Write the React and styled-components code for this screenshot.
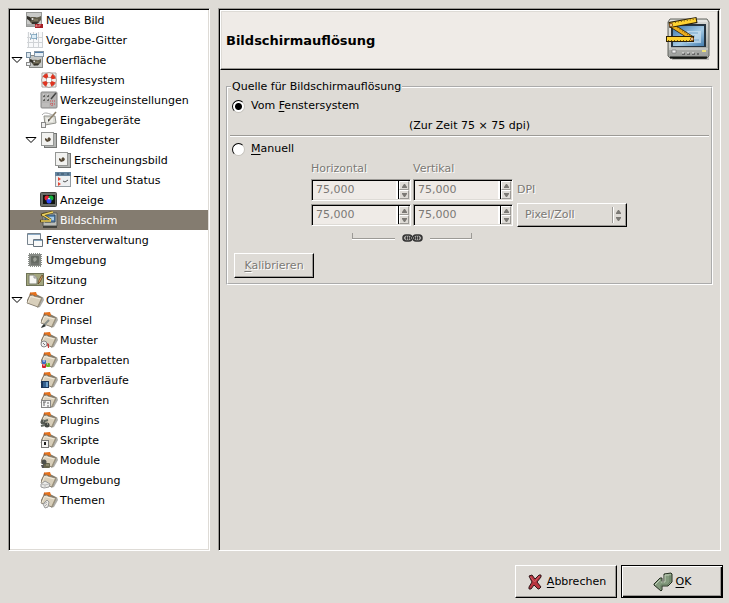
import React, { useState } from "react";
import styled, { createGlobalStyle, css } from "styled-components";

const c = {
  bg: "#dedbd6",
  pale: "#efebe7",
  shade: "#9c9a96",
  off: "#7b7975",
  selected: "#847c70",
};

const GlobalStyle = createGlobalStyle`
  * { box-sizing: border-box; }
  body { margin: 0; background: ${c.bg}; }
  body, button, input, select {
    font-family: "DejaVu Sans", sans-serif;
    font-size: 11px;
    line-height: 14px;
    color: #000;
  }
  u { text-underline-offset: 2px; text-decoration-thickness: 1px; }
`;

const sunken = css`
  border: 1px solid;
  border-color: ${c.shade} #fff #fff ${c.shade};
  box-shadow: inset 1px 1px 0 #000, inset -1px -1px 0 ${c.bg};
`;

const raised = css`
  border: 1px solid;
  border-color: #fff #000 #000 #fff;
  box-shadow: inset -1px -1px 0 ${c.shade};
`;

const etched = css`
  color: ${c.off};
  text-shadow: 1px 1px 0 #fff;
`;

const Dialog = styled.div`
  min-height: 100vh;
  display: flex;
  flex-direction: column;
`;

const Main = styled.main`
  flex: 1;
  display: flex;
  gap: 8px;
  padding: 8px 8px 0;
`;

const TreePanel = styled.nav`
  ${sunken}
  flex: 0 0 202px;
  padding: 1px;
  background: #fff;
`;

const TreeList = styled.ul`
  list-style: none;
  margin: 0;
  padding: 0;
`;

const TreeRow = styled.li`
  display: flex;
  align-items: center;
  height: 20px;
  padding-left: ${(p) => p.$depth * 14}px;
  background: ${(p) => (p.$selected ? c.selected : "transparent")};
`;

const Toggle = styled.button`
  width: 16px;
  height: 20px;
  padding: 0 0 0 1px;
  border: 0;
  background: none;
  display: flex;
  align-items: center;
`;

const ToggleSpace = styled.span`
  width: 16px;
`;

const TreeItem = styled.button`
  flex: 1;
  display: flex;
  align-items: center;
  gap: 2px;
  padding: 0;
  border: 0;
  background: none;
  text-align: left;
  color: ${(p) => (p.$selected ? "#fff" : "#000")};
  white-space: nowrap;
  &:focus { outline: none; }
`;

const TreeLabel = styled.span`
  padding-top: 2px;
`;

const Panel = styled.section`
  ${sunken}
  flex: 1;
  min-width: 0;
  padding: 1px;
`;

const PanelHeader = styled.header`
  border: 1px solid;
  border-color: #fff #000 #000 #fff;
  box-shadow: inset -1px -1px 0 ${c.shade}, inset 1px 1px 0 ${c.bg};
  height: 60px;
  padding: 0 5px;
  background: ${c.pale};
  display: flex;
  align-items: center;
  justify-content: space-between;
`;

const Title = styled.h1`
  margin: 0;
  padding-top: 2px;
  font-size: 13px;
  line-height: 18px;
`;

const Group = styled.fieldset`
  margin: 10px 6px 0;
  padding: 4px 2px 5px;
  border: 2px groove #fff;
  min-width: 0;
`;

const Legend = styled.legend`
  margin-left: 1px;
  padding: 0 1px;
`;

const Choice = styled.label`
  display: flex;
  align-items: center;
  gap: 6px;
  height: 16px;
  padding-left: 2px;
`;

const Radio = styled.input`
  appearance: none;
  width: 13px;
  height: 13px;
  margin: 0;
  border-radius: 50%;
  border: 1px solid;
  border-color: #000 #c6c3bd #c6c3bd #000;
  background: #fff;
  &:checked { background: radial-gradient(circle, #000 0 3px, #fff 4px); }
`;

const Current = styled.p`
  margin: 5px 0 2px;
  text-align: center;
`;

const Rule = styled.hr`
  margin: 0 0 4px;
  border: 0;
  border-top: 1px solid ${c.shade};
  border-bottom: 1px solid #fff;
`;

const Manual = styled.div`
  display: grid;
  grid-template-columns: 100px 100px 112px;
  grid-template-rows: 18px 24px 26px 20px;
  column-gap: 2px;
  align-items: center;
  margin: 3px 0 0 81px;
`;

const FieldLabel = styled.label`
  ${etched}
`;

const Unit = styled.span`
  ${etched}
  padding-left: 2px;
`;

const Spin = styled.div`
  ${sunken}
  display: flex;
  height: 22px;
  padding: 1px;
  background: ${c.pale};
`;

const SpinInput = styled.input`
  ${etched}
  text-shadow: none;
  flex: 1;
  min-width: 0;
  padding: 0 3px;
  border: 0;
  border-right: 2px solid #fff;
  background: transparent;
`;

const Steps = styled.div`
  width: 11px;
  display: flex;
  flex-direction: column;
  border-left: 1px solid #000;
`;

const Step = styled.button`
  flex: 1;
  display: flex;
  align-items: center;
  justify-content: center;
  padding: 0;
  border: 1px solid;
  border-color: #fff ${c.shade} ${c.shade} #fff;
  background: ${c.bg};
`;

const SelectBox = styled.div`
  ${raised}
  display: grid;
  grid-template-columns: 1fr 14px;
  align-items: center;
  height: 24px;
  margin-left: 2px;
`;

const Select = styled.select`
  ${etched}
  appearance: none;
  grid-area: 1 / 1 / 2 / 3;
  height: 22px;
  padding: 0 7px;
  border: 0;
  background: transparent;
  opacity: 1;
`;

const SelectArrows = styled.svg`
  grid-area: 1 / 2;
  pointer-events: none;
`;

const ChainRow = styled.div`
  grid-column: 1 / 3;
  display: flex;
  align-items: center;
  justify-content: center;
  gap: 7px;
  height: 16px;
  padding: 0 41px;
`;

const Arm = styled.span`
  flex: 1;
  height: 6px;
  margin-bottom: 5px;
  border-bottom: 1px solid ${c.shade};
  box-shadow: 0 1px 0 #fff;
  border-left: ${(p) => (p.$left ? `1px solid ${c.shade}` : "0")};
  border-right: ${(p) => (p.$left ? "0" : `1px solid ${c.shade}`)};
`;

const ChainButton = styled.button`
  display: flex;
  padding: 0;
  border: 0;
  background: none;
`;

const Calibrate = styled.button`
  ${raised}
  ${etched}
  width: 80px;
  height: 25px;
  margin: 5px 0 0 4px;
  padding: 0;
  background: ${c.bg};
`;

const Footer = styled.footer`
  display: flex;
  justify-content: flex-end;
  gap: 4px;
  padding: 14px 6px 5px;
`;

const Action = styled.button`
  ${raised}
  display: flex;
  align-items: center;
  justify-content: center;
  gap: 3px;
  width: 102px;
  height: 33px;
  padding: 0;
  background: ${c.bg};
  ${(p) =>
    p.$primary &&
    css`
      border-color: #000;
      box-shadow: inset 1px 1px 0 #fff, inset -1px -1px 0 #000, inset -2px -2px 0 ${c.shade};
    `}
`;

const ActionIcon = styled.svg`
  flex: none;
`;

/* Emblems drawn over the lower left corner of a folder */
const emblems = {
  brush: (
    <>
      <path d="M9 9 4 14" stroke="#8b918c" strokeWidth="2" />
      <path d="M1 17l1-2 2-2 2 2-2 1z" fill="#303634" />
    </>
  ),
  pattern: (
    <>
      <circle cx="4" cy="13" r="3" fill="#eee" stroke="#888" />
      <path d="M7 12l2 1v4H8z" fill="#c93a3a" />
      <path d="M3 12l2 2" stroke="#777" />
    </>
  ),
  palette: (
    <>
      <rect x="2" y="9" width="4" height="4" rx="1" fill="#3d6cc0" />
      <rect x="2" y="13" width="4" height="4" rx="1" fill="#d2222c" />
      <rect x="6" y="12" width="4" height="4" rx="1" fill="#6cb52b" />
      <path d="M3 10h2M3 14h2M7 13h1" stroke="#eef" />
    </>
  ),
  gradient: (
    <>
      <rect x="1" y="10" width="8" height="7" fill="#1d3657" />
      <rect x="3" y="11" width="3" height="5" fill="#36618f" />
      <rect x="6" y="11" width="2" height="5" fill="#6fa1cb" />
    </>
  ),
  font: (
    <>
      <rect x="1.5" y="9.500" width="9" height="7" fill="#f6f6f6" stroke="#858585" />
      <path d="M3 11h3M4 11v4M8 11v2M8 14v2" stroke="#666" />
    </>
  ),
  plug: (
    <>
      <circle cx="3" cy="11" r="2.5" fill="#555953" />
      <circle cx="7" cy="14" r="2.5" fill="#444843" />
      <path d="M1 15l4-1M5 10l3-1" stroke="#5f665e" strokeWidth="2" />
      <path d="M3 10h1M7 13h1" stroke="#c3c6bf" />
    </>
  ),
  script: (
    <>
      <rect x="1.5" y="9.500" width="7" height="7" fill="#f4f4f4" stroke="#777" />
      <path d="M4 11h2v3H4z" fill="#222" />
    </>
  ),
  module: (
    <>
      <rect x="3" y="12" width="7" height="5" rx="1" fill="#68664e" />
      <circle cx="4" cy="11" r="2.5" fill="#4d504c" />
      <path d="M1 14h3v3H2z" fill="#555" />
      <path d="M6 14h3" stroke="#aaa68b" />
    </>
  ),
  cube: (
    <>
      <path d="M1 13l4-3 5 3-1 3-5 1-3-1z" fill="#e9e9e6" stroke="#999" />
      <path d="M1 13l4 1 4-1M5 14v3" stroke="#bbb" fill="none" />
    </>
  ),
  theme: (
    <>
      <path d="M3 13l4-4 2 2-1 5-3 1z" fill="#eceae5" stroke="#999" />
      <path d="M4 13l3-2M5 15l2-2" stroke="#aaa" />
    </>
  ),
};

function Folder({ emblem }) {
  return (
    <>
      <path d="M15 6h2l1 3-4 7-3 1z" fill="#6a675f" opacity=".55" />
      <path d="M1 9 4 3h6l6 3-1 2-3 8L1 12z" fill="#857c6b" />
      <path d="M4.500 1.500 10 1l1 3-1 1-6-2z" fill="#e5711b" />
      <path d="M4.500 1.500 4 4l5 1" stroke="#ac470c" strokeWidth=".7" />
      <path d="M1 12 4 4.500l3-.5 1 1 8 2-4 9z" fill="#d8cfbb" stroke="#82796a" strokeWidth=".8" />
      <path d="M2 11.500 4.500 5.500l10 2.500" stroke="#f3ecdc" />
      <path d="M12 15l3.500-7.500" stroke="#a1977f" />
      {emblem && emblems[emblem]}
    </>
  );
}

const Wilber = () => (
  <>
    <path d="M4 11c-1-3 0-5 2-5h3c2 1 4 0 6-1v4l-3 3-6 1z" fill="#605c4b" />
    <path d="M1 5l3 1 2 3-2 1-3-2z" fill="#302e28" />
    <path d="M6 11h7l-2 2H6z" fill="#37332b" />
    <circle cx="6.5" cy="8" r="1" fill="#eee" />
    <path d="M8 9h4" stroke="#9c927a" />
  </>
);

const ImageStack = () => (
  <>
    <rect x="4.5" y="2.500" width="12" height="14" fill="#b4b6b4" stroke="#747674" />
    <rect x="1.5" y="1.500" width="12" height="13" fill="#f2f2f0" stroke="#949694" />
    <path d="M5 7l2 1 2-2 2 2-1 2-3 1-2-2z" fill="#554937" />
    <path d="M7 8h1" stroke="#d9cdb8" />
  </>
);

const icons = {
  newImage: () => (
    <>
      <rect x=".5" y="1.500" width="15" height="14" fill="#c9cac8" stroke="#969896" />
      <Wilber />
      <path d="M1 14h8" stroke="#888" />
      <rect x="9" y="13" width="8" height="4" fill="#a51d25" />
      <path d="M10 16v-2h1v2M13 16v-2h2" stroke="#f5aaa7" fill="none" strokeWidth=".7" />
    </>
  ),
  grid: () => (
    <>
      <rect x="1" y="1" width="16" height="16" fill="#f8f9fa" />
      <path d="M1 6.500h16M1 11.500h16M1 16.500h16M2.500 1v16M7.500 1v16M12.500 1v16M16.500 1v16" stroke="#d0d3d6" />
      <path d="M5.500 3.500h5v4h-5z" fill="#dcecf5" stroke="#8eb0c6" />
      <path d="M4 3h1M10 3h1M4 8h1M10 8h1" stroke="#416d8c" />
    </>
  ),
  interface: () => (
    <>
      <rect x="3.5" y="4.500" width="13" height="12" fill="#c6c8c6" stroke="#878987" />
      <g transform="translate(3 4) scale(.8)"><Wilber /></g>
      <rect x="8.5" y=".5" width="9" height="5" fill="#e5eef5" stroke="#8898a7" />
      <path d="M9 1.500h8" stroke="#547fa9" />
      <rect x=".5" y="1.500" width="4" height="5" fill="#dce7ef" stroke="#788ea0" />
      <rect x=".5" y="11.500" width="4" height="3" fill="#edf0f2" stroke="#888" />
    </>
  ),
  help: () => (
    <>
      <path d="M2 2h14v14H2z" fill="none" stroke="#a9a29c" />
      <circle cx="9" cy="9" r="5" fill="none" stroke="#837b76" strokeWidth="5" />
      <circle cx="9" cy="9" r="5" fill="none" stroke="#f4eeea" strokeWidth="4" />
      <circle cx="9" cy="9" r="5" fill="none" stroke="#df3420" strokeWidth="4" strokeDasharray="4 3.854" strokeDashoffset="-1.927" />
    </>
  ),
  tools: () => (
    <>
      <rect x="1" y="1" width="16" height="16" rx="1" fill="#b5b4b3" stroke="#888" />
      <path d="M3 5h2M7 5h2M3 9h2M7 9h2" stroke="#474846" strokeWidth="1.500" />
      <path d="M3 4h1M7 4h1M3 8h1M7 8h1" stroke="#eee" />
      <path d="M11 8l5-6" stroke="#444" strokeWidth="1.500" />
      <path d="M10 10h5M10 13h5M12 12v3" stroke="#d1474b" strokeDasharray="1 1" />
      <path d="M2 13h7M2 15h7" stroke="#c6c5c4" />
    </>
  ),
  input: () => (
    <>
      <path d="M4 5h11l1 7-11 2z" fill="#dcdcd6" stroke="#91928c" />
      <path d="M6 7h7v4H6z" fill="#eeeee9" />
      <path d="M9 9l7-8" stroke="#8a7d67" strokeWidth="1.500" fill="none" />
      <path d="M8 8l2 1-2 2z" fill="#444" />
      <path d="M2 4c3-4 7-1 11 0" stroke="#aaa" fill="none" />
      <rect x="1.5" y="11.500" width="4" height="5" fill="#eee" stroke="#888" />
    </>
  ),
  images: ImageStack,
  appearance: ImageStack,
  titles: () => (
    <>
      <rect x="1.5" y="1.500" width="15" height="14" fill="#edf0f2" stroke="#949ca2" />
      <path d="M1 3h16" stroke="#65849e" strokeWidth="4" />
      <path d="M3 3h2M7 3h3M13 3h2" stroke="#354f67" />
      <path d="M4 6l3 2-3 2zM4 11l3 2-3 2z" fill="#e14a37" />
      <path d="M9 10l2 1 3-2" stroke="#555" fill="none" />
    </>
  ),
  display: () => (
    <>
      <rect x=".5" y="1.500" width="16" height="14" rx="1" fill="#696d67" stroke="#40433e" />
      <path d="M3 4h12v9H3z" fill="#11150f" />
      <circle cx="7" cy="7" r="2.5" fill="#e02332" />
      <circle cx="11" cy="7" r="2.5" fill="#12b13a" />
      <circle cx="9" cy="10" r="2.5" fill="#314cf2" />
      <path d="M8 7h2l-1 2z" fill="#fff" />
    </>
  ),
  monitor: () => (
    <>
      <path d="M3 2h14v13H3z" fill="#bcbeb9" stroke="#565952" />
      <path d="M5 4h10v7H5z" fill="#5d8ab3" stroke="#2c4965" />
      <path d="M9 6h5v3H9z" fill="#a9cce7" />
      <path d="M1 4 13 1M3 4l8 5M0 10h11" stroke="#54420c" strokeWidth="2.5" />
      <path d="M2 4 13 1M3 4l8 5M1 10h10" stroke="#ecd263" strokeWidth="1.4" />
      <path d="M3 16h14" stroke="#30332f" strokeWidth="1.5" />
    </>
  ),
  windows: () => (
    <>
      <path d="M1.5 2.5h13v11h-13z" fill="#f5f7f8" stroke="#77838d" />
      <path d="M2 3.5h12" stroke="#89a9c3" />
      <path d="M7.500 8.500h9v7h-9z" fill="#f9fafa" stroke="#68747e" />
      <path d="M8 9.500h8" stroke="#86a5bd" />
    </>
  ),
  chip: () => (
    <>
      <path d="M3 3h12v12H3z" stroke="#8b8f8a" strokeWidth="2" strokeDasharray="1 1" />
      <rect x="3" y="3" width="12" height="12" fill="#868a85" />
      <rect x="5" y="5" width="8" height="7" rx="1" fill="#656a63" />
      <path d="M7 8l2-2 2 2-1 2-2 1z" fill="#9da098" />
      <path d="M5 13h8" stroke="#5a5d59" />
    </>
  ),
  session: () => (
    <>
      <rect x=".5" y="2.500" width="17" height="12" fill="#a3a67e" stroke="#6f7358" />
      <path d="M3 4h5l3 3v6H3z" fill="#f7f7f3" stroke="#777b6b" />
      <path d="M8 4v3h3" fill="#ccc" stroke="#999" />
      <path d="M12 13l1-4 3-5 1 1-3 6z" fill="#dfa263" stroke="#593f22" strokeWidth=".7" />
    </>
  ),
};

function RowIcon({ kind }) {
  const Drawing = icons[kind];
  return (
    <svg width="18" height="18" viewBox="0 0 18 18" fill="none" aria-hidden="true">
      {Drawing ? <Drawing /> : <Folder emblem={emblems[kind] ? kind : null} />}
    </svg>
  );
}

function MonitorArt() {
  const ticks = "1 2";
  return (
    <svg width="48" height="48" viewBox="0 0 48 48" fill="none" aria-hidden="true">
      <defs>
        <linearGradient id="screen" x1="0" y1="0" x2="1" y2="1">
          <stop stopColor="#3975a9" />
          <stop offset=".55" stopColor="#a5cae4" />
          <stop offset="1" stopColor="#437daf" />
        </linearGradient>
        <linearGradient id="case" x1="0" y1="0" x2="0" y2="1">
          <stop stopColor="#dadbd8" />
          <stop offset="1" stopColor="#9b9d9a" />
        </linearGradient>
      </defs>
      <path d="M7 41h37v3H7z" fill="#8a8985" opacity=".5" />
      <path d="M6 39h36l-1 4H8z" fill="#171916" />
      <path d="M5 3h37l2 3v34l-2 2H5l-2-2V6z" fill="url(#case)" stroke="#62645f" />
      <path d="M5 41.500h37" stroke="#171916" strokeWidth="2" />
      <path d="M5 5h37M5 5v27" stroke="#f1f2ef" />
      <path d="M6 8h35v23H6z" fill="#25333f" />
      <path d="M8 10h31v20H8z" fill="url(#screen)" />
      <path d="M22 15h14v12H22z" fill="#cae0ef" opacity=".7" />
      <path d="M24 17h9M24 20h6M29 24h5" stroke="#75a5c9" />
      <path d="M4 33h39" stroke="#d9dad7" />
      <path d="M7 34h4v3H7z" fill="#eee" stroke="#777" strokeWidth=".7" />
      <path d="M17 38h3M22 38h3M27 38h3M32 38h2" stroke="#555" strokeWidth="1.5" />
      <path d="M17 37h2M22 37h2M27 37h2" stroke="#eee" />
      <path d="M37 35h4" stroke="#eee27b" strokeWidth="2" />
      <path d="M6 9 28 23" stroke="#2b1f05" strokeWidth="5" />
      <path d="M6 9 28 23" stroke="#ecad1d" strokeWidth="3.4" />
      <path d="M7 8 28 22" stroke="#6b4b10" strokeWidth="1" strokeDasharray={ticks} />
      <path d="M4 9 32 4" stroke="#2b1f05" strokeWidth="6" />
      <path d="M5 9 31 4" stroke="#ffd331" strokeWidth="4" />
      <path d="M7 7 31 3" stroke="#765611" strokeWidth="1" strokeDasharray={ticks} />
      <path d="M1 23h28" stroke="#2b1f05" strokeWidth="6" />
      <path d="M2 23h26" stroke="#ffd331" strokeWidth="4" />
      <path d="M3 24.500h24" stroke="#765611" strokeWidth="1" strokeDasharray={ticks} />
      <circle cx="6" cy="9" r="1.5" fill="#fff3c7" stroke="#8f4b14" />
      <circle cx="27" cy="23" r="1.5" fill="#fff3c7" stroke="#8f4b14" />
    </svg>
  );
}

const Triangle = ({ up }) => (
  <svg width="5" height="4" viewBox="0 0 5 4" aria-hidden="true">
    <path d={up ? "M2 0h1l2 3v1H0V3z" : "M0 0h5v1L3 4H2L0 1z"} fill={c.off} />
  </svg>
);

const rows = [
  [0, "newImage", "Neues Bild"],
  [0, "grid", "Vorgabe-Gitter"],
  [0, "interface", "Oberfläche", true],
  [1, "help", "Hilfesystem"],
  [1, "tools", "Werkzeugeinstellungen"],
  [1, "input", "Eingabegeräte"],
  [1, "images", "Bildfenster", true],
  [2, "appearance", "Erscheinungsbild"],
  [2, "titles", "Titel und Status"],
  [1, "display", "Anzeige"],
  [1, "monitor", "Bildschirm"],
  [0, "windows", "Fensterverwaltung"],
  [0, "chip", "Umgebung"],
  [0, "session", "Sitzung"],
  [0, "folder", "Ordner", true],
  [1, "brush", "Pinsel"],
  [1, "pattern", "Muster"],
  [1, "palette", "Farbpaletten"],
  [1, "gradient", "Farbverläufe"],
  [1, "font", "Schriften"],
  [1, "plug", "Plugins"],
  [1, "script", "Skripte"],
  [1, "module", "Module"],
  [1, "cube", "Umgebung"],
  [1, "theme", "Themen"],
];

function SpinBox({ id, label }) {
  return (
    <Spin>
      <SpinInput id={id} aria-label={label} defaultValue="75,000" disabled />
      <Steps>
        <Step type="button" aria-label="Erhöhen" disabled><Triangle up /></Step>
        <Step type="button" aria-label="Verringern" disabled><Triangle /></Step>
      </Steps>
    </Spin>
  );
}

export default function App() {
  const [selected, setSelected] = useState("monitor");
  const [source, setSource] = useState("system");
  return (
    <Dialog>
      <GlobalStyle />
      <Main>
        <TreePanel aria-label="Einstellungen">
          <TreeList>
            {rows.map(([depth, kind, label, open]) => (
              <TreeRow key={kind} $depth={depth} $selected={selected === kind}>
                {open ? (
                  <Toggle type="button" aria-label={label} aria-expanded="true">
                    <svg width="12" height="8" viewBox="0 0 12 8" fill="#fff" stroke="#000">
                      <path d="M1 1.500h10l-5 5z" />
                    </svg>
                  </Toggle>
                ) : (
                  <ToggleSpace />
                )}
                <TreeItem type="button" $selected={selected === kind} onClick={() => setSelected(kind)}>
                  <RowIcon kind={kind} />
                  <TreeLabel>{label}</TreeLabel>
                </TreeItem>
              </TreeRow>
            ))}
          </TreeList>
        </TreePanel>

        <Panel>
          <PanelHeader>
            <Title>Bildschirmauflösung</Title>
            <MonitorArt />
          </PanelHeader>
          <Group>
            <Legend>Quelle für Bildschirmauflösung</Legend>
            <Choice>
              <Radio type="radio" name="source" checked={source === "system"} onChange={() => setSource("system")} />
              <span>Vom <u>F</u>enstersystem</span>
            </Choice>
            <Current>(Zur Zeit 75 × 75 dpi)</Current>
            <Rule />
            <Choice>
              <Radio type="radio" name="source" checked={source === "manual"} onChange={() => setSource("manual")} />
              <span><u>M</u>anuell</span>
            </Choice>
            <Manual>
              <FieldLabel htmlFor="x-dpi">Horizontal</FieldLabel>
              <FieldLabel htmlFor="y-dpi">Vertikal</FieldLabel>
              <span />
              <SpinBox id="x-dpi" />
              <SpinBox id="y-dpi" />
              <Unit>DPI</Unit>
              <SpinBox id="x-unit" label="Horizontal" />
              <SpinBox id="y-unit" label="Vertikal" />
              <SelectBox>
                <Select aria-label="Einheit" disabled>
                  <option>Pixel/Zoll</option>
                </Select>
                <SelectArrows width="14" height="18" viewBox="0 0 14 18">
                  <path d="M.5 1v16" stroke={c.shade} />
                  <path d="M1.500 1v16" stroke="#fff" />
                  <path d="M6 4h1l2 3v1H4V7zM4 11h5v1l-2 3H6l-2-3z" fill={c.off} />
                </SelectArrows>
              </SelectBox>
              <ChainRow>
                <Arm $left />
                <ChainButton type="button" aria-label="Verketten" disabled>
                  <svg width="21" height="8" viewBox="0 0 21 8" fill="none">
                    <rect x="1" y="1" width="9" height="6" rx="3" fill="#aaa8a5" stroke="#333" strokeWidth="1.5" />
                    <rect x="11" y="1" width="9" height="6" rx="3" fill="#aaa8a5" stroke="#333" strokeWidth="1.5" />
                    <path d="M3 4h15" stroke="#333" strokeWidth="2" />
                    <path d="M3 4h15" stroke="#d5d2ce" strokeDasharray="1 1" />
                    <path d="M2 2.500h7M12 2.500h7M2 5.500h7M12 5.500h7" stroke="#555" strokeDasharray="1 1" />
                  </svg>
                </ChainButton>
                <Arm />
              </ChainRow>
            </Manual>
            <Calibrate type="button" disabled><u>K</u>alibrieren</Calibrate>
          </Group>
        </Panel>
      </Main>

      <Footer>
        <Action type="button">
          <ActionIcon width="18" height="18" viewBox="0 0 18 18" aria-hidden="true">
            <path d="M3 3l3-1 3 4 4-4h2v2l-4 5 4 5-2 2h-1l-4-4-3 4H3v-2l3-5z" fill="#b8343f" stroke="#30171a" />
            <path d="M4.500 4l4 5 5-6" stroke="#d0606a" fill="none" />
          </ActionIcon>
          <span><u>A</u>bbrechen</span>
        </Action>
        <Action type="button" $primary>
          <ActionIcon width="20" height="20" viewBox="0 0 20 20" aria-hidden="true">
            <path d="M11 2l7-1 1 1v8l-4 4H9v4l-1 1-7-6v-1l6-6h2v4h2z" fill="#839a7d" stroke="#263022" />
            <path d="M12 3h6M7 8l-5 5M12 3v7H8" stroke="#c4d0bc" fill="none" />
            <path d="M17 3v7l-3 3H8v4" stroke="#657b60" fill="none" />
          </ActionIcon>
          <span><u>O</u>K</span>
        </Action>
      </Footer>
    </Dialog>
  );
}
